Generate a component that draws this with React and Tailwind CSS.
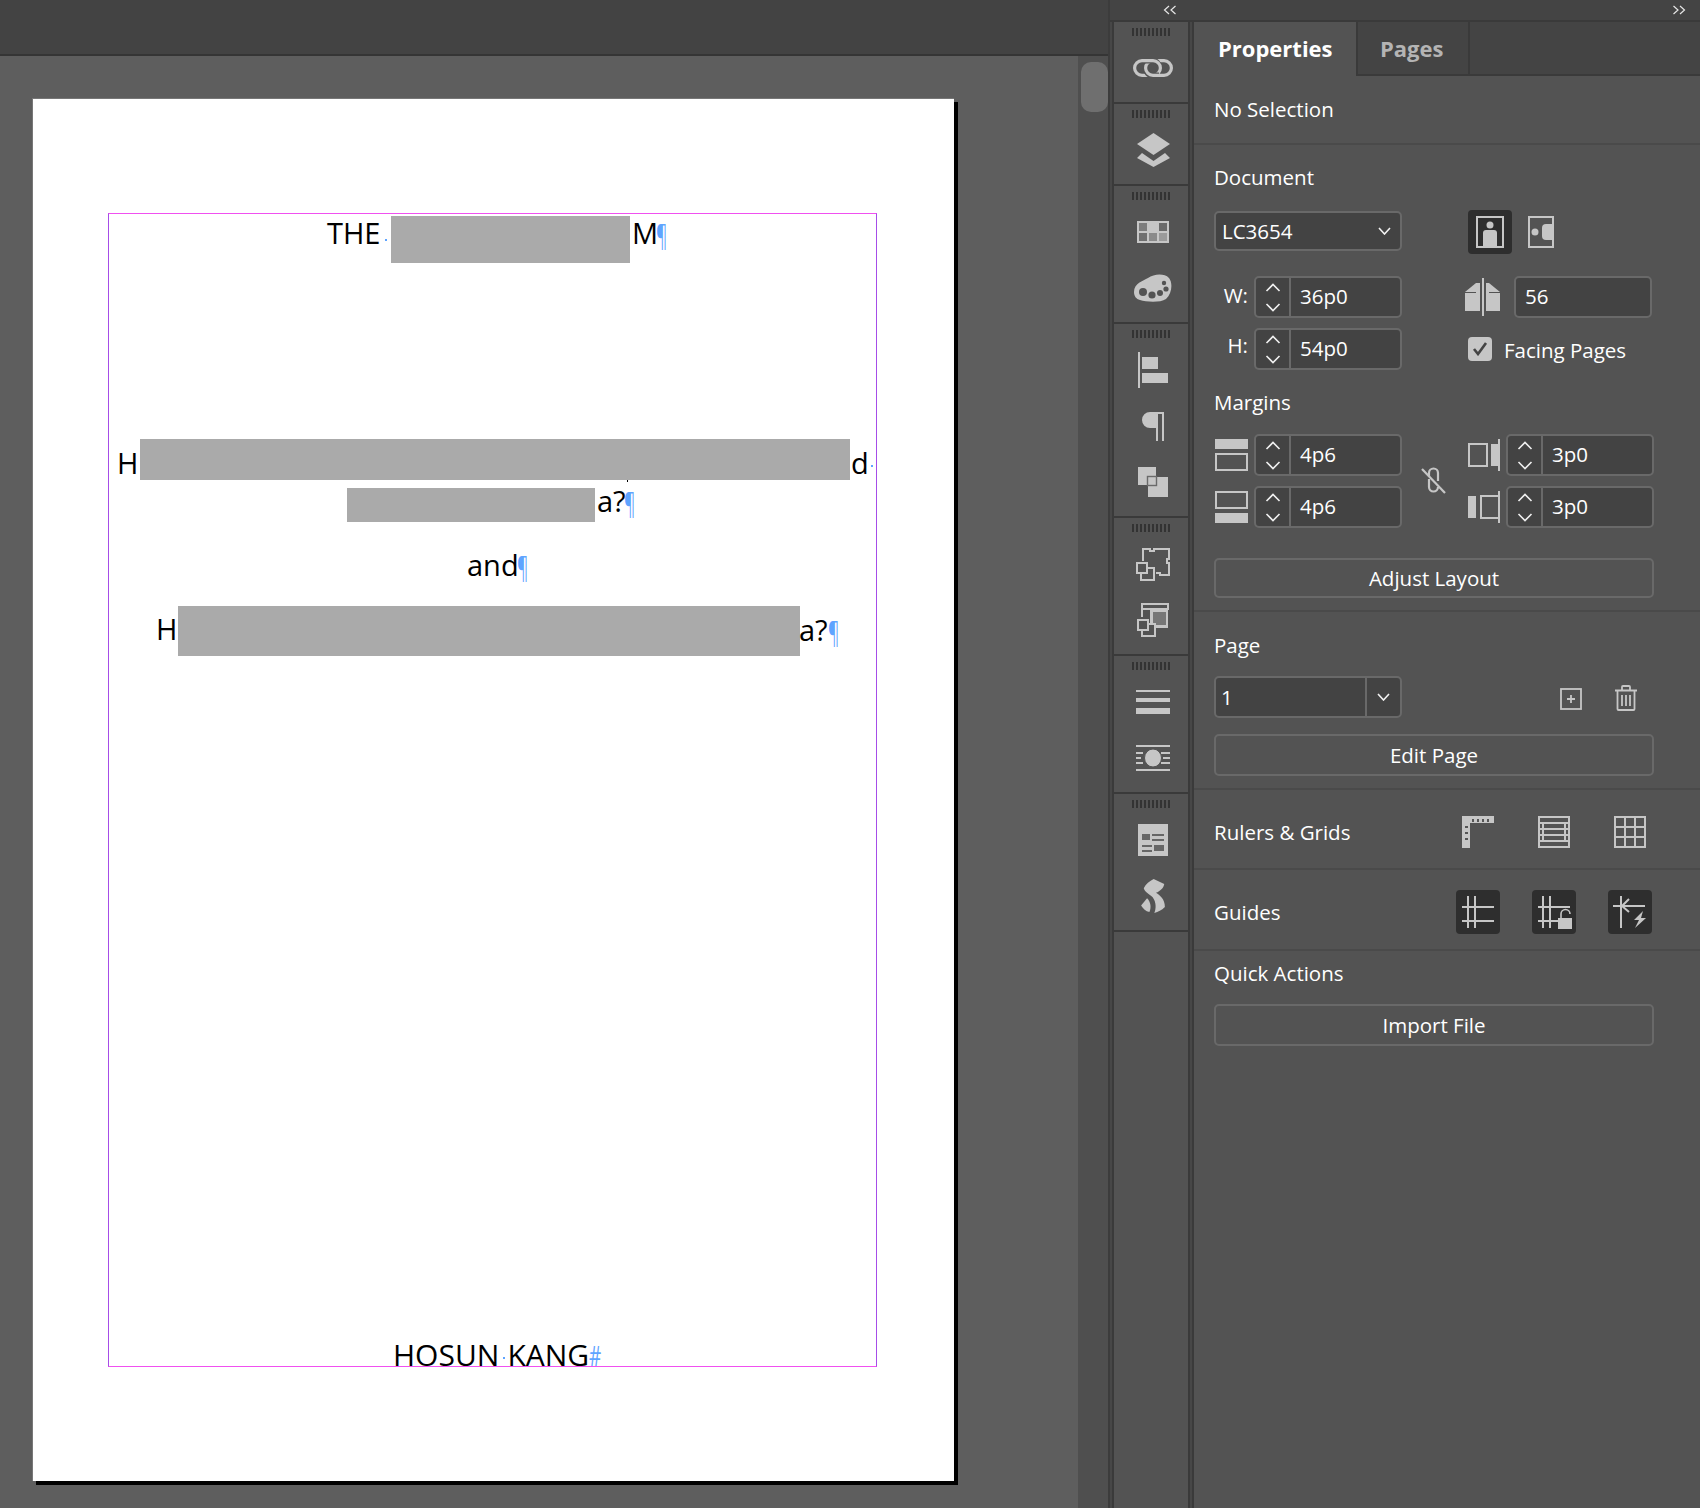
import React from 'react';

const ICON = '#c6c6c6';
const BG = '#535353';

const Redact = ({ w, h }) => <div className={`bg-[#aaaaaa] shrink-0 ${w} ${h}`}></div>;

const Pil = ({ className }) => (
  <span className={`inline-block w-[10px] h-[40px] text-[29px] leading-[44px] text-[#5fa4ff] scale-x-[0.6] origin-left overflow-visible ${className || '-ml-[2px]'}`}>¶</span>
);

const Dot = ({ className }) => <span className={`inline-block w-[2px] h-[2px] bg-[#5fa4ff] shrink-0 ${className}`}></span>;

const Word = ({ className, children }) => <span className={`leading-[40px] h-[40px] shrink-0 whitespace-pre ${className || ''}`}>{children}</span>;

const Grip = () => (
  <div className="flex gap-[2px] h-[8px] w-[38px] ml-[18px] shrink-0">
    {[0, 1, 2, 3, 4, 5, 6, 7, 8, 9].map((i) => <span key={i} className="w-[2px] h-full bg-[#333333]"></span>)}
  </div>
);

const Slot = ({ children }) => <div className="h-[56px] flex items-center justify-center ml-[4px]">{children}</div>;

const DockGroup = ({ className, children }) => (
  <div className={`flex flex-col pt-[6px] border-b-2 border-[#3a3a3a] ${className}`}>
    <Grip />
    <div className="mt-[4px]">{children}</div>
  </div>
);

const Chev = ({ up }) => (
  <svg width="16" height="9" viewBox="0 0 16 9" fill="none" stroke="#f0f0f0" strokeWidth="1.6">
    <path d={up ? 'M1.5 8 L8 1.5 L14.5 8' : 'M1.5 1 L8 7.5 L14.5 1'} />
  </svg>
);

const Stepper = ({ value, className }) => (
  <div className={`h-[42px] flex bg-[#434343] border-2 border-[#696969] rounded-[5px] shrink-0 ${className}`}>
    <div className="w-[35px] shrink-0 border-r-2 border-[#696969] flex flex-col items-center justify-center gap-[11px]">
      <Chev up />
      <Chev />
    </div>
    <div className="pl-[9px] leading-[37px] text-white">{value}</div>
  </div>
);

const Btn = ({ children, className }) => (
  <div className={`w-[440px] flex items-center justify-center border-2 border-[#696969] rounded-[5px] text-white ${className}`}>{children}</div>
);

const Sep = () => <div className="h-[2px] bg-[#4a4a4a] shrink-0"></div>;

const Dark = ({ children }) => <div className="w-[44px] h-[44px] bg-[#2e2e2e] rounded-[4px] flex items-center justify-center">{children}</div>;

const Small = () => (
  <svg width="13" height="8" viewBox="0 0 13 8" fill="none" stroke="#f2f2f2" strokeWidth="1.6"><path d="M1 1 L6.5 7 L12 1" /></svg>
);

export default function App() {
  return (
    <div className="w-[1700px] h-[1508px] flex overflow-hidden bg-[#535353] font-['Open_Sans',sans-serif]">
      {/* document area */}
      <div className="w-[1108px] shrink-0 flex flex-col">
        <div className="h-[56px] shrink-0 bg-[#434343] border-b-2 border-[#353535]"></div>
        <div className="flex-1 flex min-h-0">
          <div className="w-[1078px] shrink-0 bg-[#5e5e5e] pl-[32px] pt-[42px]">
            <div className="w-[922px] h-[1383px] bg-white border-l border-t border-[#777777] shadow-[4px_4px_0_#000000] pl-[75px] pt-[114px] text-black">
              <div className="w-[769px] h-[1154px] border border-x-[#a64de8] border-y-[#f050f0] flex flex-col text-[29px]">
                <div className="mt-[2px] ml-[218px] flex items-start h-[47px]">
                  <Word className="-mt-[3px] w-[55px]">THE</Word>
                  <Dot className="mt-[23px] ml-[3px]" />
                  <div className="ml-[4px]"><Redact w="w-[239px]" h="h-[47px]" /></div>
                  <Word className="-mt-[3px] ml-[2px]">M</Word>
                  <div className="-mt-[3px]"><Pil /></div>
                </div>
                <div className="mt-[176px] flex items-start h-[41px]">
                  <Word className="mt-[4px] w-[31px] pl-[8px]">H</Word>
                  <div className="relative">
                    <Redact w="w-[710px]" h="h-[41px]" />
                    <span className="absolute left-[487px] top-[41px] w-[1px] h-[2px] bg-black"></span>
                  </div>
                  <Word className="mt-[4px] ml-[1px]">d</Word>
                  <Dot className="mt-[26px] ml-[2px]" />
                </div>
                <div className="mt-[8px] ml-[238px] flex items-start h-[34px]">
                  <Redact w="w-[248px]" h="h-[34px]" />
                  <Word className="-mt-[7px] ml-[2px]">a?</Word>
                  <div className="-mt-[7px]"><Pil /></div>
                </div>
                <div className="mt-[23px] ml-[358px] flex items-start h-[39px]">
                  <Word>and</Word>
                  <Pil />
                </div>
                <div className="mt-[22px] ml-[45px] flex items-start h-[50px]">
                  <Word className="mt-[3px] w-[24px] pl-[2px]">H</Word>
                  <Redact w="w-[622px]" h="h-[50px]" />
                  <Word className="mt-[4px] -ml-[1px]">a?</Word>
                  <div className="mt-[4px]"><Pil className="ml-0" /></div>
                </div>
                <div className="mt-auto ml-[284px] flex items-start h-[31px] text-[30px]">
                  <Word>HOSUN</Word>
                  <Dot className="mt-[22px] ml-[4px] mr-[2px]" />
                  <Word>KANG</Word>
                  <span className="text-[#5fa4ff] text-[27px] leading-[42px] scale-x-[0.7] origin-left">#</span>
                </div>
              </div>
            </div>
          </div>
          <div className="flex-1 bg-[#4f4f4f] pt-[6px] pl-[3px]">
            <div className="w-[27px] h-[50px] bg-[#6f6f6f] rounded-[10px]"></div>
          </div>
        </div>
      </div>

      {/* panels */}
      <div className="flex-1 flex flex-col border-l-2 border-[#3c3c3c] min-w-0">
        <div className="h-[22px] shrink-0 bg-[#444444] border-b-2 border-[#3a3a3a] flex items-center text-[#e6e6e6]">
          <svg className="ml-[53px]" width="14" height="10" viewBox="0 0 14 10" fill="none" stroke="#e6e6e6" strokeWidth="1.2"><path d="M6 1 L1.5 5 L6 9 M12.5 1 L8 5 L12.5 9" /></svg>
          <svg className="ml-[495px]" width="14" height="10" viewBox="0 0 14 10" fill="none" stroke="#e6e6e6" strokeWidth="1.2"><path d="M1.5 1 L6 5 L1.5 9 M8 1 L12.5 5 L8 9" /></svg>
        </div>
        <div className="flex-1 flex min-h-0">
          <div className="w-[4px] bg-[#474747] shrink-0 border-r-2 border-[#3a3a3a]"></div>
          {/* dock */}
          <div className="w-[74px] shrink-0 flex flex-col bg-[#535353]">
            <DockGroup className="h-[82px]">
              <Slot>
                <svg width="40" height="18" viewBox="0 0 40 18" fill="none" stroke={ICON} strokeWidth="3.2">
                  <rect x="12.6" y="1.6" width="25.8" height="14.8" rx="7.4" />
                  <path d="M19 16.4 H9 A7.4 7.4 0 0 1 9 1.6 H19 A7.4 7.4 0 0 1 26.4 9 A7.4 7.4 0 0 1 23 15.2" stroke={BG} strokeWidth="6" />
                  <rect x="1.6" y="1.6" width="25.8" height="14.8" rx="7.4" />
                  <path d="M26 16.4 H20 A7.4 7.4 0 0 1 12.6 9" stroke={BG} strokeWidth="6" />
                  <path d="M28 16.4 H20 A7.4 7.4 0 0 1 12.6 9" />
                </svg>
              </Slot>
            </DockGroup>
            <DockGroup className="h-[82px]">
              <Slot>
                <svg width="33" height="34" viewBox="0 0 33 34" fill={ICON}>
                  <polygon points="0,11 16.5,0 33,11 16.5,22" />
                  <polygon points="0,25 5,20 16.5,28 28,20 33,25 16.5,34" />
                </svg>
              </Slot>
            </DockGroup>
            <DockGroup className="h-[138px]">
              <Slot>
                <svg width="32" height="22" viewBox="0 0 32 22">
                  <rect width="32" height="22" fill={ICON} />
                  <rect x="2" y="2" width="8" height="8" fill="#7d7d7d" />
                  <rect x="22" y="2" width="8" height="8" fill="#6a6a6a" />
                  <rect x="2" y="12" width="8" height="8" fill="#6f6f6f" />
                  <rect x="12" y="12" width="8" height="8" fill="#8a8a8a" />
                  <rect x="22" y="12" width="8" height="8" fill="#9a9a9a" />
                </svg>
              </Slot>
              <Slot>
                <svg width="38" height="28" viewBox="0 0 38 28">
                  <path d="M0 18 C0 9 9 7 14 4 C20 0 30 -1 35 4 C39 9 38 20 32 25 C26 29 12 28 6 26 C2 25 0 22 0 18 Z" fill={ICON} />
                  <circle cx="9" cy="18" r="4" fill={BG} />
                  <circle cx="18" cy="21" r="3.6" fill={BG} />
                  <circle cx="26" cy="19" r="3" fill={BG} />
                  <circle cx="32" cy="15" r="2.6" fill={BG} />
                  <circle cx="30" cy="9" r="2.2" fill={BG} />
                </svg>
              </Slot>
            </DockGroup>
            <DockGroup className="h-[194px]">
              <Slot>
                <svg width="30" height="36" viewBox="0 0 30 36" fill={ICON}>
                  <rect width="2" height="36" />
                  <rect x="4" y="5" width="16" height="12" />
                  <rect x="4" y="21" width="26" height="10" />
                </svg>
              </Slot>
              <Slot>
                <svg width="22" height="29" viewBox="0 0 22 29" fill={ICON}>
                  <path d="M8 0 H22 V29 H20 V2 H16 V29 H14 V16 H8 A8 8 0 0 1 8 0 Z" />
                </svg>
              </Slot>
              <Slot>
                <svg width="30" height="30" viewBox="0 0 30 30">
                  <rect width="18" height="18" fill={ICON} />
                  <rect x="10" y="10" width="20" height="20" fill={ICON} />
                  <rect x="9.5" y="9.5" width="9" height="9" fill={ICON} stroke="#6a6a6a" strokeWidth="1.4" />
                </svg>
              </Slot>
            </DockGroup>
            <DockGroup className="h-[138px]">
              <Slot>
                <svg width="34" height="33" viewBox="0 0 34 33" fill="none" stroke={ICON} strokeWidth="2">
                  <path d="M7 13 V1 H14 V3 H18 V1 H33 V11 H31 V15 H33 V27 H24 V25 H20" />
                  <rect x="1" y="15" width="10" height="10" />
                  <path d="M11 20 H18 V32 H5 V25" />
                </svg>
              </Slot>
              <Slot>
                <svg width="32" height="34" viewBox="0 0 32 34">
                  <rect x="5" y="1" width="26" height="5" fill="none" stroke={ICON} strokeWidth="2" />
                  <path d="M5 6 V14" fill="none" stroke={ICON} strokeWidth="2" />
                  <rect x="13" y="7" width="18" height="18" fill={ICON} />
                  <rect x="16" y="9" width="13" height="13" fill="#777777" />
                  <rect x="1" y="17" width="10" height="10" fill={BG} stroke={ICON} strokeWidth="2" />
                  <path d="M11 21 H18 V33 H5 V27" fill={BG} stroke={ICON} strokeWidth="2" />
                  <rect x="1" y="17" width="10" height="10" fill="none" stroke={ICON} strokeWidth="2" />
                </svg>
              </Slot>
            </DockGroup>
            <DockGroup className="h-[138px]">
              <Slot>
                <svg width="34" height="24" viewBox="0 0 34 24" fill={ICON}>
                  <rect width="34" height="2" />
                  <rect y="8" width="34" height="4" />
                  <rect y="18" width="34" height="6" />
                </svg>
              </Slot>
              <Slot>
                <svg width="34" height="26" viewBox="0 0 34 26" fill={ICON}>
                  <rect width="34" height="2" />
                  <rect y="24" width="34" height="2" />
                  <rect y="7" width="7" height="2" />
                  <rect y="12" width="5" height="2" />
                  <rect y="17" width="7" height="2" />
                  <rect x="25" y="7" width="9" height="2" />
                  <rect x="27" y="12" width="7" height="2" />
                  <rect x="25" y="17" width="9" height="2" />
                  <ellipse cx="17" cy="13" rx="8.5" ry="9" stroke={BG} strokeWidth="1" />
                </svg>
              </Slot>
            </DockGroup>
            <DockGroup className="h-[138px]">
              <Slot>
                <svg width="30" height="32" viewBox="0 0 30 32">
                  <rect width="30" height="32" fill={ICON} />
                  <rect x="4" y="10" width="8" height="6" fill="#666666" />
                  <rect x="14" y="10" width="12" height="2" fill="#666666" />
                  <rect x="14" y="15" width="12" height="2" fill="#666666" />
                  <rect x="4" y="21" width="10" height="2" fill="#666666" />
                  <rect x="4" y="26" width="10" height="2" fill="#666666" />
                  <rect x="16" y="21" width="10" height="6" fill="#666666" />
                </svg>
              </Slot>
              <Slot>
                <svg width="24" height="34" viewBox="0 0 72 103" fill={ICON}>
                  <path d="M38 0 L70 15 C68 28 58 36 45 42 C58 50 72 62 72 85 C62 95 52 100 40 103 C46 88 46 70 35 55 C24 46 12 40 8 28 C14 15 26 6 38 0 Z" />
                  <path d="M0 80 L18 58 C28 68 32 84 25 100 C14 98 6 90 0 80 Z" />
                </svg>
              </Slot>
            </DockGroup>
          </div>
          <div className="w-[6px] shrink-0 bg-[#474747] border-x-2 border-[#3a3a3a]"></div>

          {/* properties panel */}
          <div className="flex-1 min-w-0 flex flex-col bg-[#535353] text-white text-[20.5px] font-medium">
            <div className="h-[54px] shrink-0 flex bg-[#444444] border-b-2 border-[#3a3a3a] font-bold text-[22px]">
              <div className="w-[162px] h-[54px] bg-[#535353] pl-[24px] leading-[52px] text-white">Properties</div>
              <div className="w-[114px] pl-[22px] leading-[52px] text-[#b4b4b4] border-l-2 border-r-2 border-[#3a3a3a]">Pages</div>
            </div>
            <div className="h-[67px] shrink-0 flex items-center pl-[20px]">No Selection</div>
            <Sep />

            <div className="pl-[20px] pb-[12px]">
              <div className="pt-[18px] leading-[28px]">Document</div>
              <div className="mt-[19px] flex items-start h-[44px]">
                <div className="mt-[1px] w-[188px] h-[40px] bg-[#434343] border-2 border-[#696969] rounded-[5px] flex items-center justify-between pl-[6px] pr-[9px]">
                  <span>LC3654</span>
                  <Small />
                </div>
                <div className="ml-[66px] w-[44px] h-[44px] bg-[#2e2e2e] rounded-[4px] flex items-center justify-center">
                  <svg width="28" height="32" viewBox="0 0 28 32">
                    <rect x="1" y="1" width="26" height="30" fill="none" stroke={ICON} strokeWidth="2" />
                    <circle cx="14" cy="9" r="3.5" fill={ICON} />
                    <path d="M7 17 Q7 14 10 14 H18 Q21 14 21 17 V30 H7 Z" fill={ICON} />
                  </svg>
                </div>
                <svg className="ml-[16px] mt-[6px]" width="26" height="32" viewBox="0 0 26 32">
                  <rect x="1" y="1" width="24" height="30" fill="none" stroke={ICON} strokeWidth="2" />
                  <circle cx="7" cy="16" r="3.5" fill={ICON} />
                  <path d="M25 8 H18 Q14 8 14 12 V20 Q14 24 18 24 H25 Z" fill={ICON} />
                </svg>
              </div>

              <div className="mt-[22px] flex items-center">
                <div className="w-[34px] text-right leading-[42px] -mt-[5px]">W:</div>
                <Stepper value="36p0" className="ml-[6px] w-[148px]" />
                <svg className="ml-[63px]" width="35" height="38" viewBox="0 0 35 38" fill={ICON}>
                  <rect x="17" width="2" height="38" />
                  <polygon points="0,14 11,5 11,14" />
                  <polygon points="24,5 35,14 24,14" />
                  <rect x="0" y="15" width="15" height="18" />
                  <rect x="21" y="15" width="14" height="18" />
                  <rect x="11" y="5" width="4" height="10" />
                  <rect x="21" y="5" width="3" height="10" />
                </svg>
                <div className="ml-[14px] w-[138px] h-[42px] bg-[#434343] border-2 border-[#696969] rounded-[5px] pl-[9px] leading-[37px]">56</div>
              </div>
              <div className="mt-[10px] flex items-center">
                <div className="w-[34px] text-right leading-[42px] -mt-[8px]">H:</div>
                <Stepper value="54p0" className="ml-[6px] w-[148px]" />
                <div className="ml-[66px] w-[24px] h-[24px] bg-[#c6c6c6] rounded-[4px] flex items-center justify-center">
                  <svg width="16" height="14" viewBox="0 0 16 14" fill="none" stroke="#444444" strokeWidth="2.6"><path d="M2 7 L6 12 L14 1" /></svg>
                </div>
                <span className="ml-[12px] mt-[2px]">Facing Pages</span>
              </div>

              <div className="mt-[18px] leading-[28px]">Margins</div>
              <div className="mt-[18px] flex items-center">
                <div className="flex flex-col gap-[10px] w-[188px]">
                  <div className="flex items-center">
                    <svg className="ml-[1px]" width="33" height="32" viewBox="0 0 33 32" fill={ICON}>
                      <rect width="33" height="10" />
                      <rect x="1" y="15" width="31" height="16" fill="none" stroke={ICON} strokeWidth="2" />
                    </svg>
                    <Stepper value="4p6" className="ml-[6px] w-[148px]" />
                  </div>
                  <div className="flex items-center">
                    <svg className="ml-[1px]" width="33" height="32" viewBox="0 0 33 32" fill={ICON}>
                      <rect y="22" width="33" height="10" />
                      <rect x="1" y="1" width="31" height="16" fill="none" stroke={ICON} strokeWidth="2" />
                    </svg>
                    <Stepper value="4p6" className="ml-[6px] w-[148px]" />
                  </div>
                </div>
                <svg className="ml-[19px]" width="25" height="28" viewBox="0 0 25 28" fill="none" stroke={ICON} strokeWidth="2.2">
                  <path d="M1 2 L24 26" />
                  <path d="M8 9 V6 a4.5 4.5 0 0 1 9 0 V14 M17 20 a4.5 4.5 0 0 1 -9 0 V12" />
                </svg>
                <div className="ml-[22px] flex flex-col gap-[10px]">
                  <div className="flex items-center">
                    <svg width="32" height="32" viewBox="0 0 32 32" fill={ICON}>
                      <rect x="1" y="5" width="18" height="22" fill="none" stroke={ICON} strokeWidth="2" />
                      <rect x="23" y="5" width="7" height="22" />
                      <rect x="30" width="2" height="32" />
                    </svg>
                    <Stepper value="3p0" className="ml-[6px] w-[148px]" />
                  </div>
                  <div className="flex items-center">
                    <svg width="32" height="32" viewBox="0 0 32 32" fill={ICON}>
                      <rect x="0" y="5" width="8" height="22" />
                      <path d="M32 5 H13 V27 H32" fill="none" stroke={ICON} strokeWidth="2" />
                      <rect x="30" width="2" height="32" />
                    </svg>
                    <Stepper value="3p0" className="ml-[6px] w-[148px]" />
                  </div>
                </div>
              </div>
              <Btn className="mt-[30px] h-[40px]">Adjust Layout</Btn>
            </div>
            <Sep />

            <div className="pl-[20px] pb-[12px]">
              <div className="pt-[19px] leading-[28px]">Page</div>
              <div className="mt-[17px] flex items-center h-[42px]">
                <div className="w-[188px] h-[42px] bg-[#434343] border-2 border-[#696969] rounded-[5px] flex">
                  <div className="flex-1 pl-[5px] leading-[38px]">1</div>
                  <div className="w-[35px] border-l-2 border-[#696969] flex items-center justify-center"><Small /></div>
                </div>
                <svg className="ml-[158px] mt-[4px]" width="22" height="22" viewBox="0 0 22 22" fill="none" stroke={ICON} strokeWidth="1.8">
                  <rect x="1" y="1" width="20" height="20" />
                  <path d="M7 11 H15 M11 7 V15" />
                </svg>
                <svg className="ml-[33px] mt-[2px]" width="22" height="26" viewBox="0 0 22 26" fill="none" stroke={ICON} strokeWidth="1.8">
                  <path d="M0 5.5 H22 M7 5 V2 Q7 1 8 1 H14 Q15 1 15 2 V5" />
                  <path d="M2.5 6 V24 Q2.5 25 3.5 25 H18.5 Q19.5 25 19.5 24 V6" />
                  <path d="M7 10 V21 M11 10 V21 M15 10 V21" />
                </svg>
              </div>
              <Btn className="mt-[16px] h-[42px]">Edit Page</Btn>
            </div>
            <Sep />

            <div className="h-[78px] shrink-0 pl-[20px] pr-[54px] pt-[5px] flex items-center justify-between">
              <span className="mt-[2px]">Rulers &amp; Grids</span>
              <div className="flex gap-[44px]">
                <svg width="32" height="32" viewBox="0 0 32 32">
                  <path d="M0 0 H32 V7 H8 V32 H0 Z" fill={ICON} />
                  <path d="M11 3 V6 M16 3 V6 M21 3 V6 M26 3 V6 M3 11 H6 M3 17 H6 M3 23 H6" stroke="#555555" strokeWidth="2" />
                </svg>
                <svg width="32" height="32" viewBox="0 0 32 32" fill="none" stroke={ICON} strokeWidth="2">
                  <rect x="1" y="1" width="30" height="30" />
                  <path d="M1 7 H31 M1 13 H31 M1 19 H31 M1 25 H31 M5 7 V25 M27 7 V25" />
                </svg>
                <svg width="32" height="32" viewBox="0 0 32 32" fill="none" stroke={ICON} strokeWidth="2">
                  <rect x="1" y="1" width="30" height="30" />
                  <path d="M11 1 V31 M21 1 V31 M1 11 H31 M1 21 H31" />
                </svg>
              </div>
            </div>
            <Sep />

            <div className="h-[79px] shrink-0 pl-[20px] pr-[48px] pt-[4px] flex items-center justify-between">
              <span className="mt-[2px]">Guides</span>
              <div className="flex gap-[32px]">
                <Dark>
                  <svg width="32" height="32" viewBox="0 0 32 32" fill="none" stroke={ICON} strokeWidth="2">
                    <path d="M6 0 V32 M13 0 V32 M0 11 H32 M0 25 H32" />
                  </svg>
                </Dark>
                <Dark>
                  <svg width="36" height="36" viewBox="0 0 36 36">
                    <path d="M7 2 V34 M14 2 V34 M2 13 H34 M2 27 H22" fill="none" stroke={ICON} strokeWidth="2" />
                    <rect x="22" y="24" width="14" height="11" fill={ICON} />
                    <path d="M25 24 V20 a4.5 4.5 0 0 1 9 0" fill="none" stroke={ICON} strokeWidth="1.6" />
                  </svg>
                </Dark>
                <Dark>
                  <svg width="34" height="36" viewBox="0 0 34 36">
                    <path d="M8 2 V34 M0 12 H32 M16 5 L9 12 L16 18" fill="none" stroke={ICON} strokeWidth="2" />
                    <path d="M30 17 L21 26 H26 L22 34 L33 24 H28 Z" fill={ICON} />
                  </svg>
                </Dark>
              </div>
            </div>
            <Sep />

            <div className="pl-[20px]">
              <div className="pt-[8px] leading-[28px]">Quick Actions</div>
              <Btn className="mt-[17px] h-[42px]">Import File</Btn>
            </div>
          </div>
        </div>
      </div>
    </div>
  );
}
